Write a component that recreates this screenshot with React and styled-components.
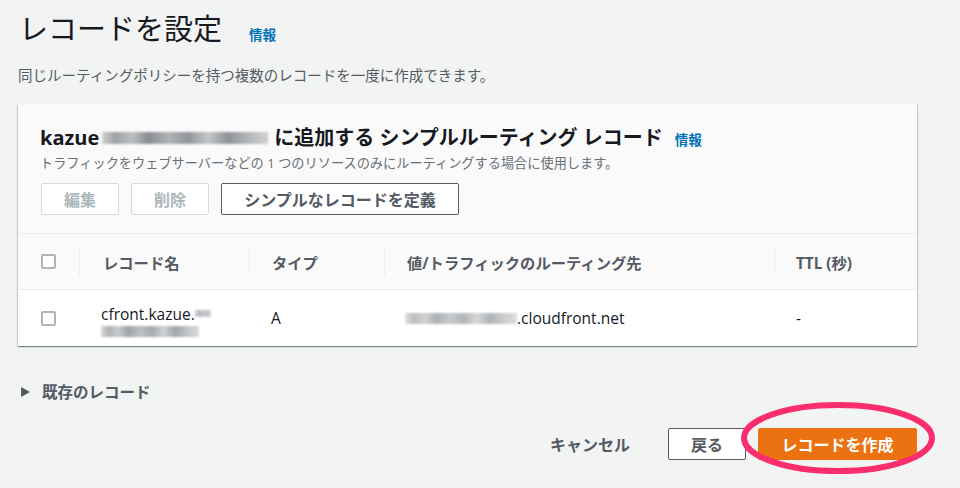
import React from "react";
import styled, { createGlobalStyle } from "styled-components";

const Global = createGlobalStyle`
  html, body { margin: 0; padding: 0; background: #f2f3f3; }
  body { font-family: "Open Sans", "Noto Sans CJK JP", sans-serif; color: #16191f; }
`;

const Page = styled.div`
  position: relative;
  width: 960px;
  height: 488px;
  box-sizing: border-box;
  padding: 9px 43px 0 18px;
  overflow: hidden;
`;

const TitleRow = styled.div`
  display: flex;
  align-items: baseline;
  gap: 27px;
  padding-left: 1px;
`;

const Title = styled.h1`
  margin: 0;
  font-size: 29px;
  line-height: 40px;
  font-weight: 400;
  color: #16191f;
`;

const InfoLink = styled.a`
  font-size: ${(p) => p.$size || 13.5}px;
  font-weight: 700;
  color: #0073bb;
  text-decoration: none;
`;

const Subtitle = styled.p`
  margin: 17px 0 0;
  font-size: 14.5px;
  line-height: 20px;
  color: #545b64;
`;

const Card = styled.section`
  margin-top: 18px;
  background: #ffffff;
  box-shadow: 0 1px 1px 0 rgba(0, 28, 36, 0.3), 1px 1px 1px 0 rgba(0, 28, 36, 0.15),
    -1px 1px 1px 0 rgba(0, 28, 36, 0.15);
`;

const CardHeader = styled.div`
  background: #fafafa;
  padding: 21px 22px 18px;
  border-bottom: 1px solid #eaeded;
`;

const CardTitleRow = styled.div`
  display: flex;
  align-items: baseline;
  gap: 12px;
`;

const CardTitle = styled.h2`
  margin: 0;
  font-size: 20px;
  line-height: 26px;
  font-weight: 700;
  color: #16191f;
  display: flex;
  align-items: center;
`;

const Blur = styled.span`
  display: inline-block;
  width: ${(p) => p.$w}px;
  height: ${(p) => p.$h || 10}px;
  margin: 0 ${(p) => p.$mr || 0}px 0 ${(p) => p.$ml || 0}px;
  background: linear-gradient(
    90deg,
    #c9cbce 0%,
    #8e9297 8%,
    #b3b6b9 18%,
    #767b81 28%,
    #a3a7ab 40%,
    #80858a 52%,
    #bcbfc2 64%,
    #7c8186 76%,
    #a9acb0 88%,
    #c8cacc 100%
  );
  filter: blur(1.1px);
  opacity: ${(p) => p.$o || 0.85};
  vertical-align: middle;
`;

const CardDesc = styled.p`
  margin: 3px 0 0;
  font-size: 13.2px;
  line-height: 18px;
  color: #687078;
`;

const ButtonRow = styled.div`
  display: flex;
  gap: 12px;
  margin-top: 11px;
  padding-left: 1px;
`;

const Button = styled.button`
  height: 32px;
  box-sizing: border-box;
  padding: 0 ${(p) => p.$px || 22}px;
  min-width: ${(p) => p.$minw || 0}px;
  font-family: inherit;
  font-size: 16px;
  font-weight: 700;
  border-radius: 2px;
  background: #ffffff;
  color: ${(p) => (p.disabled ? "#aab7b8" : "#545b64")};
  border: 1px solid ${(p) => (p.disabled ? "#d5dbdb" : "#545b64")};
  cursor: pointer;
`;

const PrimaryButton = styled(Button)`
  background: #ec7211;
  border-color: #ec7211;
  color: #ffffff;
`;

const LinkButton = styled(Button)`
  background: transparent;
  border-color: transparent;
  color: #545b64;
`;

const Table = styled.div`
  display: grid;
  grid-template-columns: 61px 170px 135px 390px 1fr;
`;

const HeadCell = styled.div`
  height: 55px;
  background: #fafafa;
  border-bottom: 1px solid #eaeded;
  display: flex;
  align-items: center;
  position: relative;
  padding-left: ${(p) => p.$pl ?? 24}px;
  font-size: 15.3px;
  font-weight: 700;
  color: #545b64;
  ${(p) =>
    p.$divider &&
    `&::before { content: ""; position: absolute; left: 0; top: 14px; height: 27px; border-left: 1px solid #eaeded; }`}
`;

const BodyCell = styled.div`
  height: 56px;
  background: #ffffff;
  display: flex;
  flex-direction: column;
  justify-content: center;
  padding-left: ${(p) => p.$pl ?? 23}px;
  padding-top: ${(p) => p.$pt || 0}px;
  font-size: 15.5px;
  line-height: 24px;
  color: #16191f;
  box-sizing: border-box;
`;

const Line = styled.span`
  display: flex;
  align-items: center;
`;

const Checkbox = styled.span`
  display: inline-block;
  width: 15px;
  height: 15px;
  box-sizing: border-box;
  border: 2px solid #aab7b8;
  border-radius: 2px;
  background: #ffffff;
`;

const Expander = styled.div`
  margin-top: 35px;
  display: flex;
  align-items: center;
  gap: 12px;
  padding-left: 3px;
  font-size: 15.5px;
  line-height: 22px;
  font-weight: 700;
  color: #545b64;
`;

const Triangle = styled.span`
  width: 0;
  height: 0;
  border-top: 5.5px solid transparent;
  border-bottom: 5.5px solid transparent;
  border-left: 9px solid #545b64;
`;

const Footer = styled.div`
  margin-top: 25px;
  display: flex;
  justify-content: flex-end;
  align-items: center;
  gap: 12px;
  position: relative;
`;

const CancelWrap = styled.div`
  margin-right: 5px;
`;

const Annotation = styled.svg`
  position: absolute;
  left: 739px;
  top: 400px;
  pointer-events: none;
`;

export default function App() {
  return (
    <Page>
      <Global />
      <TitleRow>
        <Title>レコードを設定</Title>
        <InfoLink href="#">情報</InfoLink>
      </TitleRow>
      <Subtitle>同じルーティングポリシーを持つ複数のレコードを一度に作成できます。</Subtitle>

      <Card>
        <CardHeader>
          <CardTitleRow>
            <CardTitle>
              kazue
              <Blur $w={166} $h={12} $ml={3} $mr={6} />
              に追加する シンプルルーティング レコード
            </CardTitle>
            <InfoLink href="#" $size={13.5}>情報</InfoLink>
          </CardTitleRow>
          <CardDesc>
            トラフィックをウェブサーバーなどの 1 つのリソースのみにルーティングする場合に使用します。
          </CardDesc>
          <ButtonRow>
            <Button disabled $minw={78}>編集</Button>
            <Button disabled $minw={78}>削除</Button>
            <Button $minw={238}>シンプルなレコードを定義</Button>
          </ButtonRow>
        </CardHeader>

        <Table>
          <HeadCell $pl={23}>
            <Checkbox />
          </HeadCell>
          <HeadCell $divider>レコード名</HeadCell>
          <HeadCell $divider $pl={23}>タイプ</HeadCell>
          <HeadCell $divider $pl={23}>値/トラフィックのルーティング先</HeadCell>
          <HeadCell $divider $pl={22}>TTL (秒)</HeadCell>

          <BodyCell $pl={23}>
            <Checkbox />
          </BodyCell>
          <BodyCell $pl={22} $pt={2}>
            <Line>
              cfront.kazue.
              <Blur $w={16} $h={7} $o={0.6} />
            </Line>
            <Line>
              <Blur $w={98} $h={11} $o={0.7} />
            </Line>
          </BodyCell>
          <BodyCell $pl={22}>A</BodyCell>
          <BodyCell $pl={21}>
            <Line>
              <Blur $w={112} $h={11} $o={0.6} />
              .cloudfront.net
            </Line>
          </BodyCell>
          <BodyCell $pl={22}>-</BodyCell>
        </Table>
      </Card>

      <Expander>
        <Triangle />
        既存のレコード
      </Expander>

      <Footer>
        <CancelWrap>
          <LinkButton $px={20}>キャンセル</LinkButton>
        </CancelWrap>
        <Button $minw={78}>戻る</Button>
        <PrimaryButton $minw={159}>レコードを作成</PrimaryButton>
      </Footer>

      <Annotation width="200" height="78" viewBox="0 0 200 78">
        <ellipse cx="99" cy="38" rx="94" ry="33" fill="none" stroke="#fa2d6d" strokeWidth="6" />
      </Annotation>
    </Page>
  );
}
